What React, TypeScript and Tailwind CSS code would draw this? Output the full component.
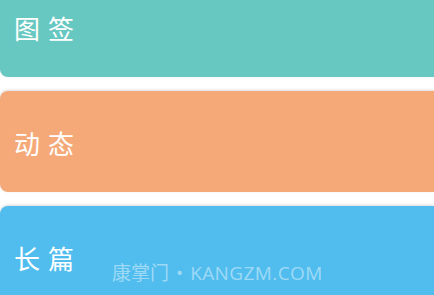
const cards = [
  { title: "图签", color: "bg-[#66c8c1]" },
  { title: "动态", color: "bg-[#f5a979]" },
  { title: "长篇", color: "bg-[#51bdee]" },
];

export default function App() {
  return (
    <div className="relative w-[434px] h-[295px] overflow-hidden bg-white font-['Noto_Sans_CJK_SC',sans-serif]">
      <div className="flex flex-col gap-[14px] -mt-[24px]">
        {cards.map((c) => (
          <div
            key={c.title}
            className={`h-[101px] rounded-l-lg ${c.color} shadow-[0_-1px_3px_rgba(0,0,0,0.15)] flex items-center pl-[14px] pt-[3px]`}
          >
            <span className="text-white text-[26px] leading-none tracking-[8px]">{c.title}</span>
          </div>
        ))}
      </div>
      <div className="absolute left-[112px] top-[261px] flex items-center text-[19px] leading-[24px] text-white/45 font-['Open_Sans','Noto_Sans_CJK_SC',sans-serif]">
        <span>康掌门</span>
        <span className="mx-[7px]">•</span>
        <span className="tracking-[0.4px]">KANGZM.COM</span>
      </div>
    </div>
  );
}
